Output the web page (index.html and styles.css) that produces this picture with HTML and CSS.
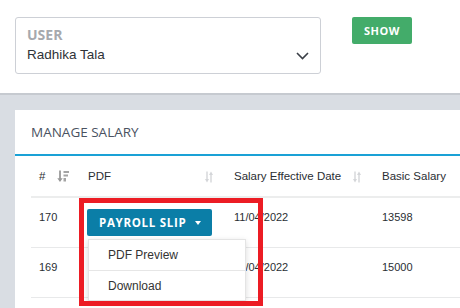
FILE: index.html
```html
<!DOCTYPE html>
<html>
<head>
<meta charset="UTF-8">
<title>Manage Salary</title>
<link rel="stylesheet" href="styles.css">
</head>
<body>
<div class="top">
  <div class="field">
    <label class="field-label">USER</label>
    <div class="field-value">
      <span>Radhika Tala</span>
      <svg class="chevron" width="13" height="8" viewBox="0 0 13 8"><polyline points="1,1 6.5,6.5 12,1" fill="none" stroke="#3a3f46" stroke-width="1.6"/></svg>
    </div>
  </div>
  <button class="btn-show">SHOW</button>
</div>

<div class="main">
  <div class="card">
    <div class="card-head">MANAGE SALARY</div>
    <div class="card-body">
      <table class="grid">
        <colgroup>
          <col style="width:49px">
          <col style="width:146px">
          <col style="width:148px">
          <col style="width:150px">
        </colgroup>
        <thead>
          <tr>
            <th><div class="th-in"><span>#</span>
              <svg class="sort active" width="12" height="13" viewBox="0 0 12 13"><path d="M3 0.5v10" stroke="#999" stroke-width="1.8"/><path d="M0.3 8.3 3 12 5.7 8.3z" fill="#999"/><rect x="6.5" y="1" width="5.5" height="2" fill="#a4a4a4"/><rect x="6.5" y="4.5" width="4.5" height="2" fill="#a4a4a4"/><rect x="6.5" y="8" width="2.5" height="3.5" fill="#a4a4a4"/></svg>
            </div></th>
            <th><div class="th-in"><span>PDF</span>
              <svg class="sort" width="8" height="12" viewBox="0 0 8 12"><path d="M2 0.5v9" stroke="#d4d6d9" stroke-width="1.4"/><path d="M0 8 2 11.5 4 8z" fill="#d4d6d9"/><path d="M6 2.5v9" stroke="#d4d6d9" stroke-width="1.4"/><path d="M4 4 6 0.5 8 4z" fill="#d4d6d9"/></svg>
            </div></th>
            <th><div class="th-in"><span>Salary Effective Date</span>
              <svg class="sort" width="8" height="12" viewBox="0 0 8 12"><path d="M2 0.5v9" stroke="#d4d6d9" stroke-width="1.4"/><path d="M0 8 2 11.5 4 8z" fill="#d4d6d9"/><path d="M6 2.5v9" stroke="#d4d6d9" stroke-width="1.4"/><path d="M4 4 6 0.5 8 4z" fill="#d4d6d9"/></svg>
            </div></th>
            <th><div class="th-in"><span>Basic Salary</span>
              <svg class="sort" width="8" height="12" viewBox="0 0 8 12"><path d="M2 0.5v9" stroke="#d4d6d9" stroke-width="1.4"/><path d="M0 8 2 11.5 4 8z" fill="#d4d6d9"/><path d="M6 2.5v9" stroke="#d4d6d9" stroke-width="1.4"/><path d="M4 4 6 0.5 8 4z" fill="#d4d6d9"/></svg>
            </div></th>
          </tr>
        </thead>
        <tbody>
          <tr>
            <td>170</td>
            <td>
              <div class="dd">
                <button class="btn-slip">PAYROLL SLIP <span class="caret"></span></button>
                <ul class="dd-menu">
                  <li>PDF Preview</li>
                  <li>Download</li>
                </ul>
                <div class="mark"></div>
              </div>
            </td>
            <td>11/04/2022</td>
            <td>13598</td>
          </tr>
          <tr>
            <td>169</td>
            <td><div class="slot"></div></td>
            <td>11/04/2022</td>
            <td>15000</td>
          </tr>
        </tbody>
      </table>
    </div>
  </div>
</div>
</body>
</html>
```

FILE: styles.css
```css
* {
    margin: 0;
    padding: 0;
    box-sizing: border-box;
}
html, body {
    overflow: hidden;
}
body {
    background: #d9dde3;
    font-family: "Liberation Sans", Arial, sans-serif;
    color: #333;
    height: 308px;
}

.top {
    background: #fff;
    height: 95px;
    border-bottom: 2px solid #c6cad0;
    padding: 17px 15px 0;
    display: flex;
    align-items: flex-start;
    gap: 31px;
}
.field {
    width: 306px;
    height: 57px;
    border: 1px solid #cdd0d6;
    border-radius: 3px;
    padding: 7px 11px 0;
}
.field-label {
    display: block;
    font-family: "Open Sans", sans-serif;
    font-weight: 700;
    font-size: 14px;
    line-height: 20px;
    color: #a6a9ae;
}
.field-value {
    display: flex;
    justify-content: space-between;
    align-items: center;
    font-size: 13.5px;
    line-height: 20px;
    color: #2f3338;
}
.chevron {
    margin-top: 2px;
}
.btn-show {
    width: 60px;
    height: 27px;
    border: none;
    border-radius: 2px;
    background: #43ac6a;
    color: #fff;
    font-family: "Open Sans", sans-serif;
    font-weight: 700;
    font-size: 11px;
    letter-spacing: 0.5px;
}

.main {
    padding: 15px 0 0 15px;
}
.card {
    width: 600px;
    height: 260px;
    background: #fff;
}
.card-head {
    height: 46px;
    padding: 0 16px;
    line-height: 44px;
    border-bottom: 2px solid #1aa1d6;
    font-family: "Open Sans", sans-serif;
    font-size: 13.5px;
    color: #4a5261;
}
.card-body {
    padding: 0 16px;
}

.grid {
    border-collapse: collapse;
    table-layout: fixed;
    width: 493px;
}
.grid th {
    text-align: left;
    font-weight: 400;
    font-size: 11.5px;
    line-height: 17px;
    color: #2a2e33;
    padding: 12px 13px 11px 8px;
    border-bottom: 2px solid #eceded;
}
.th-in {
    display: flex;
    justify-content: space-between;
    align-items: center;
}
.grid th:first-child {
    padding-right: 11px;
}
.grid td {
    font-size: 11px;
    line-height: 17px;
    color: #2a2e33;
    padding: 11px 8px;
    vertical-align: top;
    border-bottom: 1px solid #e8e9ea;
    white-space: nowrap;
}

.dd {
    position: relative;
    display: inline-block;
    margin-left: -1px;
}
.slot {
    height: 27px;
}
.btn-slip {
    display: flex;
    align-items: center;
    gap: 9px;
    height: 27px;
    width: 125px;
    padding: 0 12px;
    border: none;
    border-radius: 2px;
    background: #0b7ea7;
    color: #fff;
    font-family: "Open Sans", sans-serif;
    font-weight: 700;
    font-size: 11.5px;
    letter-spacing: 0.7px;
}
.caret {
    width: 0;
    height: 0;
    border-left: 3.5px solid transparent;
    border-right: 3.5px solid transparent;
    border-top: 4px solid #fff;
}
.dd-menu {
    position: absolute;
    top: 30px;
    left: 1px;
    width: 158px;
    list-style: none;
    background: #fff;
    border: 1px solid #e4e4e4;
    box-shadow: 0 2px 6px rgba(0, 0, 0, 0.15);
    z-index: 2;
}
.dd-menu li {
    height: 30px;
    line-height: 30px;
    padding: 0 19px;
    font-size: 12px;
    color: #333;
}
.dd-menu li + li {
    border-top: 1px solid #e6e6e6;
}
.mark {
    position: absolute;
    left: -8px;
    top: -11px;
    width: 184px;
    height: 108px;
    border: 5px solid #ec1c24;
    z-index: 3;
}
```
